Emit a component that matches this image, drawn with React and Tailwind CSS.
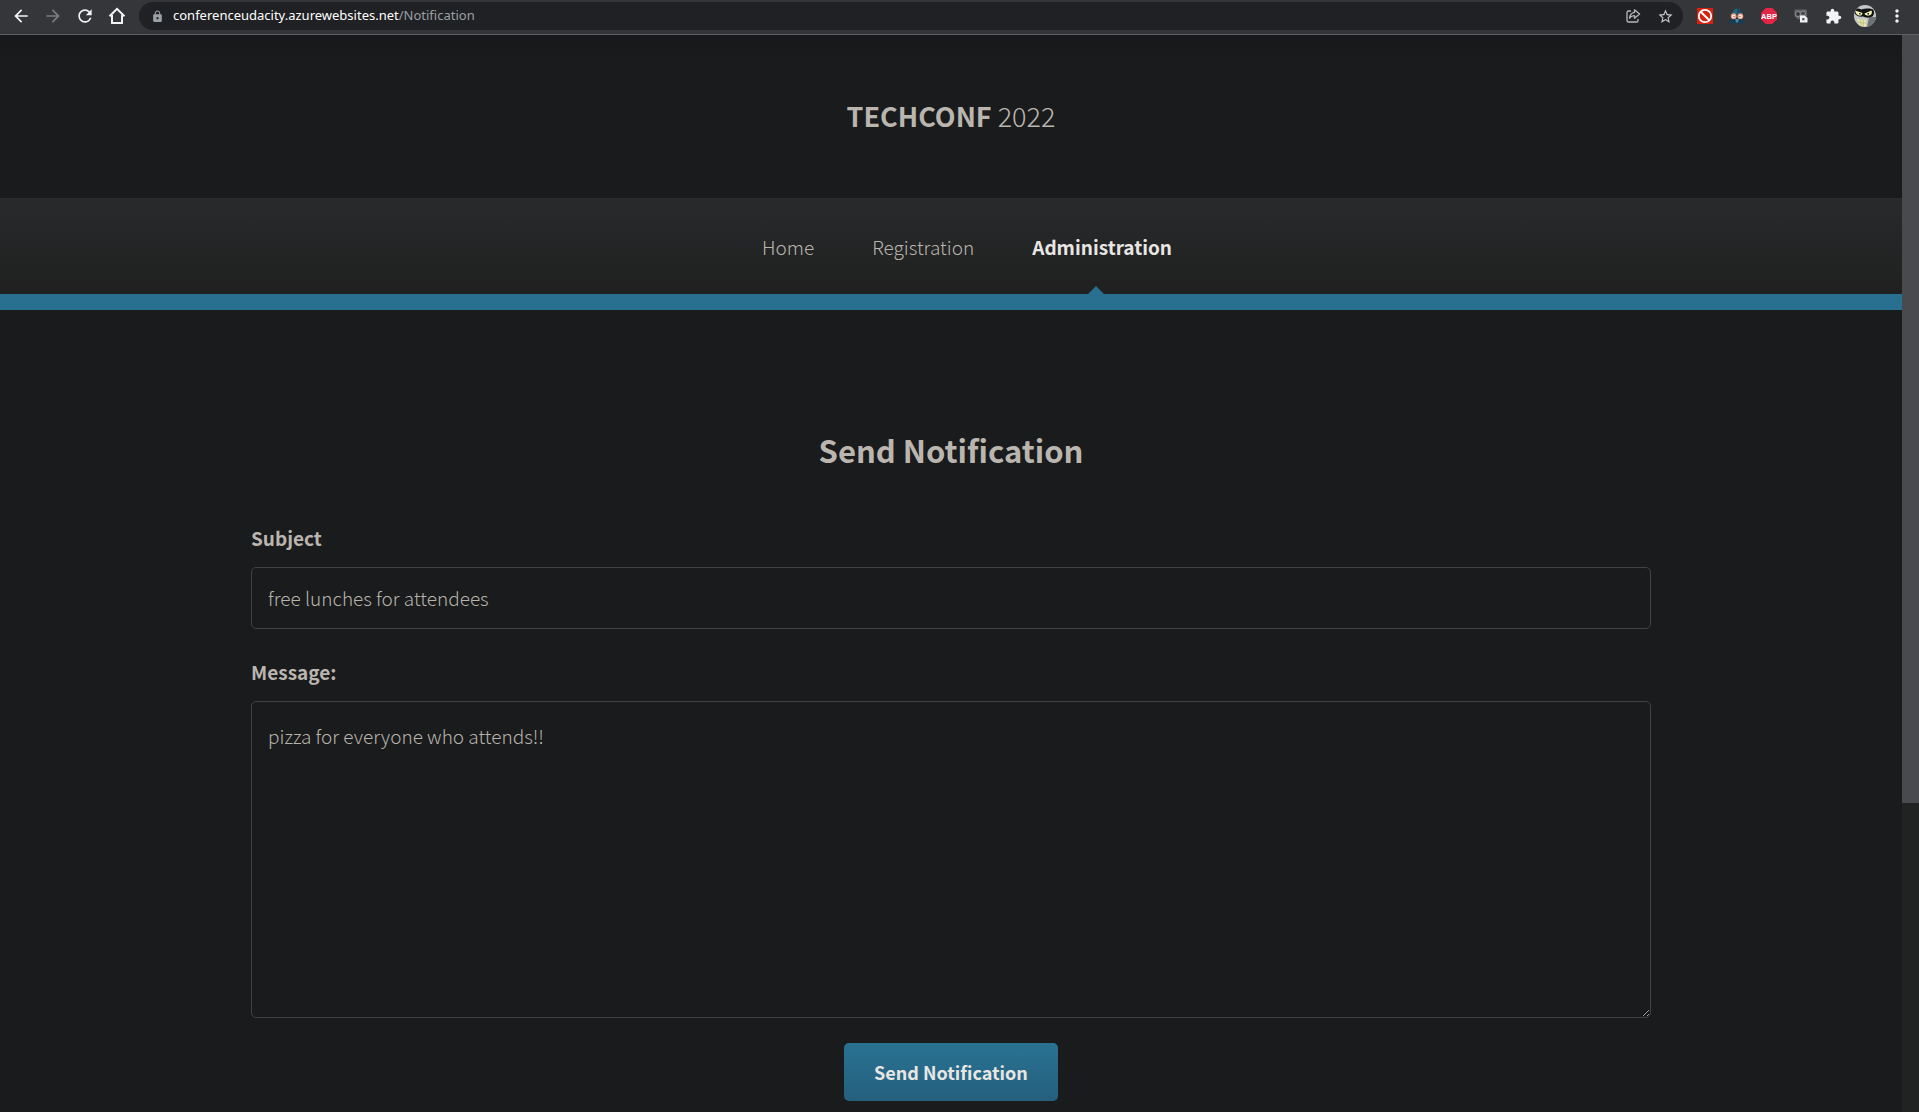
import { MdArrowBack, MdArrowForward, MdRefresh, MdLock, MdStarBorder, MdExtension, MdMoreVert } from "react-icons/md";

const iconButton = "flex size-8 shrink-0 items-center justify-center";

function HomeIcon() {
  return (
    <svg viewBox="0 0 18 18" className="size-[18px]" fill="none" stroke="currentColor" strokeWidth="2">
      <path d="M1.5 9.2 9 1.8l7.5 7.4M4 8v8h10V8" />
    </svg>
  );
}

function ShareIcon() {
  return (
    <svg viewBox="0 0 16 16" className="size-4" fill="none" stroke="currentColor" strokeWidth="1.3" strokeLinejoin="round">
      <path d="M6 3H3.6C2.6 3 2 3.600 2 4.600v7.800c0 1 .6 1.600 1.600 1.600h7.800c1 0 1.600-.6 1.600-1.600V11" />
      <path d="M9.500 1.800 14.600 6 9.500 10.200V7.700C7.300 7.700 5.700 8.500 4.500 10.200 4.800 7 6.600 4.700 9.500 4.300z" />
    </svg>
  );
}

function BlockedIcon() {
  return (
    <svg viewBox="0 0 16 16" className="size-4">
      <rect width="16" height="16" fill="#d9200f" />
      <circle cx="8" cy="8" r="6.200" fill="#d9200f" stroke="#fff" strokeWidth="1.800" />
      <path d="M3.700 3.700 12.300 12.300" stroke="#fff" strokeWidth="2" />
    </svg>
  );
}

function SpyIcon() {
  return (
    <svg viewBox="0 0 16 16" className="size-4">
      <path d="M3 7C3 3.500 5.500.5 8 .5S13 3.500 13 7z" fill="#27627c" />
      <path d="M8 .5c2.500 0 5 3 5 6.500H9z" fill="#1b4a63" />
      <path d="M0 15.500c0-3.500 3-4.500 8-4.500s8 1 8 4.500z" fill="#173c55" />
      <path d="M3 6h10v5l-3 2H6l-3-2z" fill="#152c3b" />
      <path d="M6 11h4l-1 3.500H7z" fill="#4787a0" />
      <circle cx="4.700" cy="8.300" r="2.300" fill="#fff" stroke="#e9a088" strokeWidth="1.300" />
      <circle cx="11.300" cy="8.300" r="2.300" fill="#fff" stroke="#e9a088" strokeWidth="1.300" />
      <circle cx="5" cy="8.500" r=".8" fill="#b8593f" />
      <circle cx="11" cy="8.500" r=".8" fill="#b8593f" />
    </svg>
  );
}

function AdBlockIcon() {
  return (
    <svg viewBox="0 0 16 16" className="size-4">
      <path d="M4.700 0h6.600L16 4.700v6.600L11.300 16H4.700L0 11.300V4.700z" fill="#e32646" />
      <text x="8" y="10.700" textAnchor="middle" fontSize="7.500" fontWeight="700" fill="#fff" fontFamily="Liberation Sans, sans-serif">ABP</text>
    </svg>
  );
}

function BadgeIcon() {
  return (
    <svg viewBox="0 0 16 16" className="size-4">
      <path d="M1.500 1.500h11c1 0 1.500.5 1.500 1.500v5c0 1-.5 2.500-1.500 2.500L5 11.500 1.500 8z" fill="#626366" />
      <circle cx="5" cy="6" r="2.500" fill="#35363a" stroke="#8a8b8e" strokeWidth="1.200" />
      <circle cx="10" cy="5.500" r="2.500" fill="#4a4b4e" stroke="#8a8b8e" strokeWidth="1" />
      <path d="M7 7.500h4.500l3 2.500v4.500H7z" fill="#f1f1f1" />
      <path d="M9.200 10h2.300v2.300H9.200z" fill="#55565a" />
    </svg>
  );
}

function Avatar() {
  return (
    <svg viewBox="0 0 22 22" className="size-[22px]">
      <defs>
        <clipPath id="avatar-clip"><circle cx="11" cy="11" r="11" /></clipPath>
      </defs>
      <g clipPath="url(#avatar-clip)">
        <rect width="22" height="22" fill="#c3c7c9" />
        <path d="M15 12h7v10h-9z" fill="#6c7275" />
        <path d="M0 4.500C3 3 5 3.500 7.500 4.500 11 3.500 16 3 19 4.500c1.500 1.500 1.500 5-.5 7-3 1.500-7 1.500-9.500 0C6 12 2.500 11 1 9z" fill="#111413" />
        <path d="M1 5.500 8.500 8c-.3 2-1.700 3-3.700 2.500C2.700 10 1.500 8 1 5.500z" fill="#f5f3b8" />
        <path d="M10.500 8.500 17.500 5.500c1 2.500 0 4.700-2.800 5-2 .2-3.700-.5-4.200-2z" fill="#f5f3b8" />
        <path d="M5.200 8H6.500v1.400H5.200zM13.500 8H15v1.400h-1.500z" fill="#111413" />
        <path d="M2.500 13.500c3 1.300 6.500 1.700 10 1l-.5 7H6z" fill="#e6e6a8" />
        <path d="M4 17c3 1 6 1.200 8.300.8M6 14.800l1.500 6M9.300 15v6.500" stroke="#a5a776" strokeWidth=".5" fill="none" />
      </g>
    </svg>
  );
}

function BrowserBar() {
  return (
    <div className="flex h-[35px] items-start border-b border-[#5f6063] bg-[#35363a] pr-1.5 pl-[5px] text-[#f1f3f4]">
      <button aria-label="Back" className={iconButton}><MdArrowBack size={20} /></button>
      <button aria-label="Forward" className={`${iconButton} text-[#7b7c7f]`}><MdArrowForward size={20} /></button>
      <button aria-label="Reload" className={iconButton}><MdRefresh size={20} /></button>
      <button aria-label="Home page" className={iconButton}><HomeIcon /></button>
      <div className="mt-0.5 mr-1.5 ml-1.5 flex h-7 min-w-0 flex-1 items-center rounded-full bg-[#202124] pr-0.5 pl-3 font-['Noto_Sans','Open_Sans',sans-serif] text-[13px]">
        <MdLock size={13} className="mr-[9px] text-[#9aa0a6]" />
        <a href="#address" className="min-w-0 flex-1 whitespace-nowrap text-[#9aa0a6]"><span className="text-white">conferenceudacity.azurewebsites.net</span>/Notification</a>
        <button aria-label="Share" className={`${iconButton} text-[#b5b8bb]`}><ShareIcon /></button>
        <button aria-label="Bookmark" className={`${iconButton} text-[#c3c6c9]`}><MdStarBorder size={17} /></button>
      </div>
      <button aria-label="Blocker" className={iconButton}><BlockedIcon /></button>
      <button aria-label="Privacy" className={iconButton}><SpyIcon /></button>
      <button aria-label="Adblock" className={iconButton}><AdBlockIcon /></button>
      <button aria-label="Recorder" className={iconButton}><BadgeIcon /></button>
      <button aria-label="Extensions" className={iconButton}><MdExtension size={17} /></button>
      <button aria-label="Profile" className={iconButton}><Avatar /></button>
      <button aria-label="Menu" className={iconButton}><MdMoreVert size={20} /></button>
    </div>
  );
}

const field = "block w-full rounded-[5px] border border-[#3f4142] bg-transparent px-4 text-[19px] font-light text-[#b8b4ad] outline-none";

export default function App() {
  return (
    <div className="flex h-screen flex-col overflow-hidden bg-[#1a1b1c] [color-scheme:dark]">
      <BrowserBar />
      <div className="flex min-h-0 flex-1">
        <div className="min-w-0 flex-1 overflow-hidden font-['Source_Sans_Pro','Noto_Sans_CJK_JP',sans-serif] font-light text-[#bab6af]">
          <header>
            <h1 className="flex h-[163px] items-center justify-center bg-linear-to-b from-[#17181a] to-[#1a1b1c] to-20% pb-0.5 text-[27px] leading-10">
              <a href="#top"><span className="font-bold">TECHCONF</span> 2022</a>
            </h1>
            <nav className="flex h-24 items-center justify-center gap-[58px] bg-linear-to-b from-[#292a2c] to-[#1f201f] pt-0.5 pl-8 text-[19px] leading-8">
              <a href="#home">Home</a>
              <a href="#registration">Registration</a>
              <a href="#administration" className="relative flex h-full items-center font-bold text-[#e8e6e3]">
                Administration
                <span className="absolute bottom-0 left-1/2 -ml-3.5 border-x-8 border-b-8 border-x-transparent border-b-[#296f90]" />
              </a>
            </nav>
            <div className="h-4 bg-[#296f90]" />
          </header>
          <main className="mx-auto w-full max-w-[1400px] pt-[116px]">
            <h2 className="text-center text-[31px] leading-[48px] font-bold">Send Notification</h2>
            <form onSubmit={(e) => e.preventDefault()}>
              <label htmlFor="subject" className="mt-12 block text-[19px] leading-8 font-bold">Subject</label>
              <input id="subject" type="text" defaultValue="free lunches for attendees" className={`${field} mt-[13px] h-[62px] pb-0.5`} />
              <label htmlFor="message" className="mt-[27px] block text-[19px] leading-8 font-bold">Message:</label>
              <textarea id="message" defaultValue="pizza for everyone who attends!!" className={`${field} mt-[13px] h-[317px] py-[18px] leading-8`} />
              <button type="submit" className="mx-auto mt-[25px] block h-[58px] rounded-[5px] bg-linear-to-b from-[#297292] to-[#255f7e] px-[30px] text-lg leading-8 font-bold text-[#e8e6e3]">
                Send Notification
              </button>
            </form>
          </main>
        </div>
        <div className="w-[17px] shrink-0 bg-[#212322]">
          <div className="h-[71.3%] bg-[#484a4d]" />
        </div>
      </div>
    </div>
  );
}
